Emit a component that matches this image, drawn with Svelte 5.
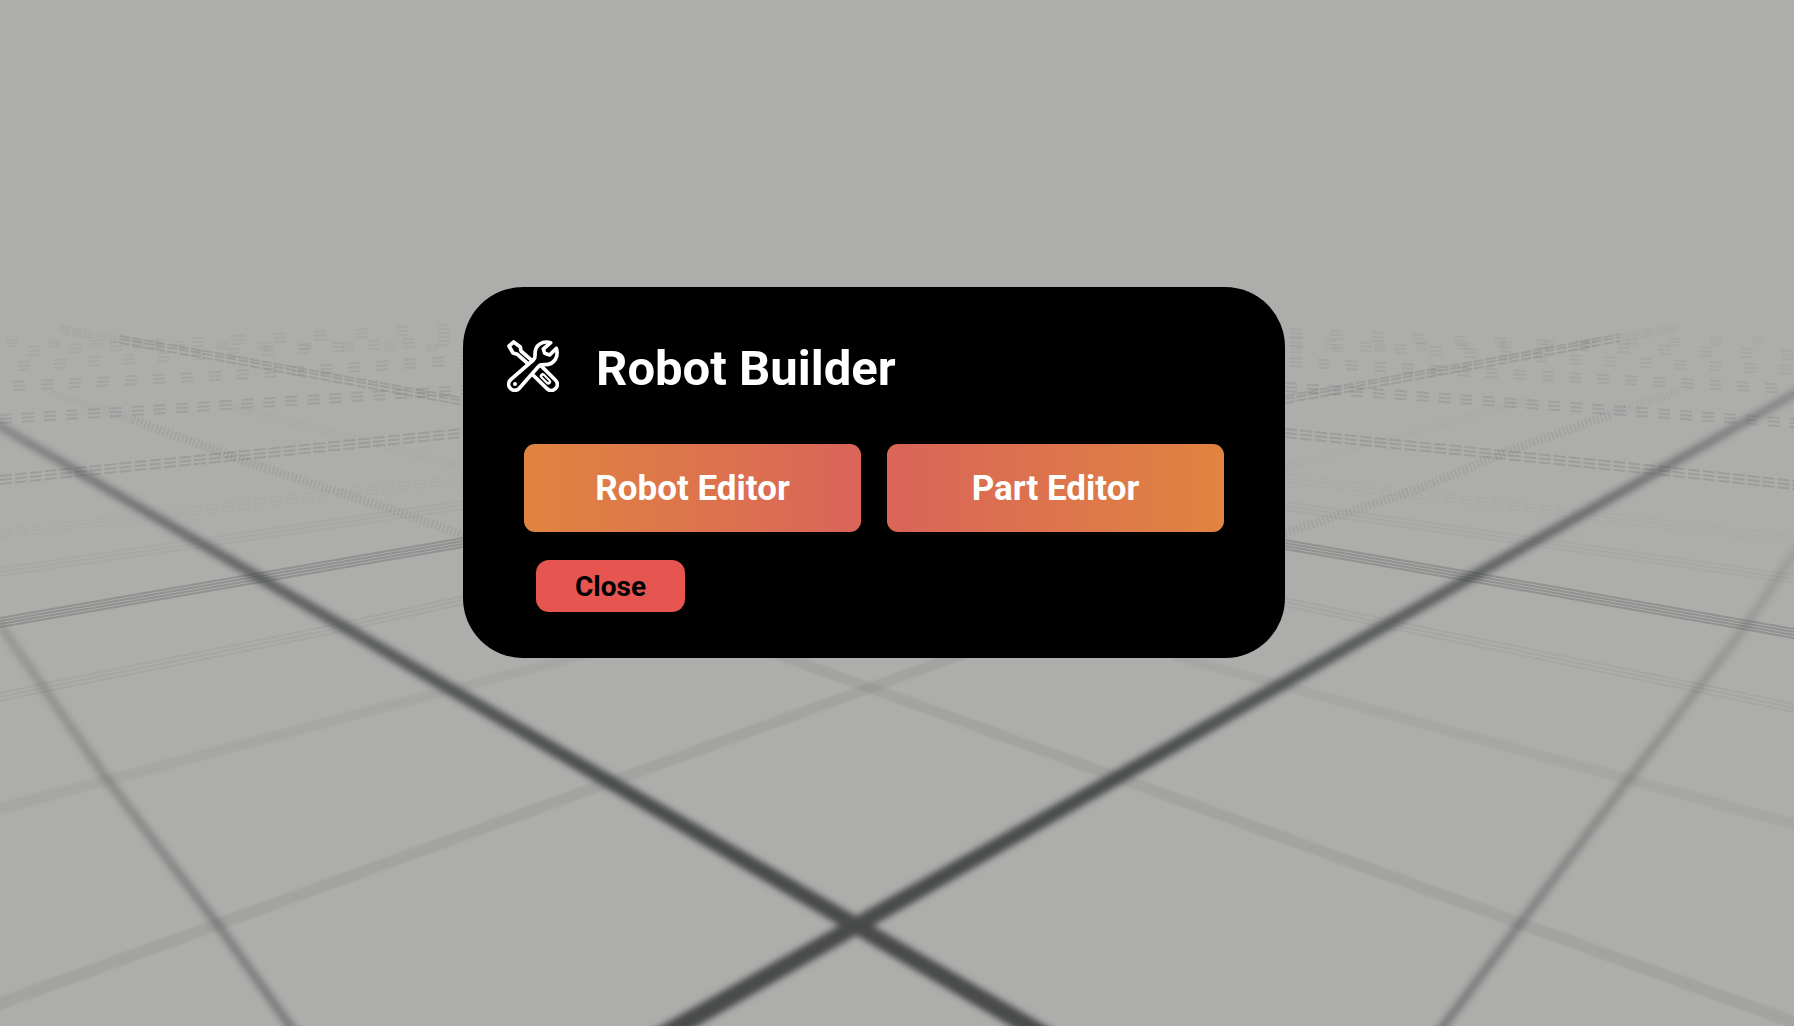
<script>
  // Tapered floor line: start point and thickness, end point and thickness.
  const band = ([x1, y1, t1, x2, y2, t2]) =>
    `${x1},${y1 - t1 / 2} ${x2},${y2 - t2 / 2} ${x2},${y2 + t2 / 2} ${x1},${y1 + t1 / 2}`;

  const major = [
    { pts: [-9, 421, 9, 1100, 1068, 22], fill: 'url(#fadeA)' },
    { pts: [1803, 389, 9, 600, 1071, 22], fill: 'url(#fadeB)' },
  ];

  const steep = [
    { d: 'M0 625 L109 782 L218 925 L303 1044', fill: 'url(#fadeC)' },
    { d: 'M1800 545 L1745 627 L1628 780 L1519 925 L1430 1044', fill: 'url(#fadeD)' },
  ];

  const minor = [
    { pts: [-10, 1007, 13, 969, 652, 11], opacity: 0.08 },
    { pts: [1804, 1026, 13, 771, 652, 11], opacity: 0.08 },
    { pts: [-10, 811, 11, 594, 652, 9], opacity: 0.05 },
    { pts: [1804, 827, 11, 1174, 656, 9], opacity: 0.05 },
  ];

  // Far lines break up into parallel hairlines.
  const striped = [
    { d: 'M0 622 L260 577 L463 542', offsets: [-4, -1, 2, 5], opacity: 0.22, dash: 'none' },
    { d: 'M1285 544 L1481 578 L1794 633', offsets: [-4, -1, 2, 5], opacity: 0.22, dash: 'none' },
    { d: 'M0 480 L77 472 L463 433', offsets: [-4, 0, 4], opacity: 0.13, dash: '12 3' },
    { d: 'M1285 433 L1665 471 L1794 485', offsets: [-4, 0, 4], opacity: 0.13, dash: '12 3' },
    { d: 'M120 340 L233 360 L463 402', offsets: [-4, -1, 3], opacity: 0.12, dash: '10 2' },
    { d: 'M1285 400 L1505 360 L1620 338', offsets: [-4, -1, 3], opacity: 0.12, dash: '10 2' },
    { d: 'M60 329 L120 340', offsets: [-3, 0, 3], opacity: 0.04, dash: '10 2' },
    { d: 'M1620 338 L1680 328', offsets: [-3, 0, 3], opacity: 0.04, dash: '10 2' },
    { d: 'M0 697 L42 688 L329 630 L463 600', offsets: [-4, 0, 4], opacity: 0.05, dash: 'none' },
    { d: 'M1285 602 L1403 627 L1699 688 L1794 708', offsets: [-4, 0, 4], opacity: 0.05, dash: 'none' },
    { d: 'M0 572 L463 505', offsets: [-4, 0, 4], opacity: 0.03, dash: 'none' },
    { d: 'M1285 506 L1794 579', offsets: [-4, 0, 4], opacity: 0.03, dash: 'none' },
    { d: 'M0 534 L463 479', offsets: [-4, 0, 4], opacity: 0.02, dash: '12 4' },
    { d: 'M1285 478 L1794 540', offsets: [-4, 0, 4], opacity: 0.02, dash: '12 4' },
    { d: 'M0 419 L133 411 L463 390', offsets: [-4, 0, 4], opacity: 0.1, dash: '12 10' },
    { d: 'M1285 387 L1430 397 L1794 423', offsets: [-4, 0, 4], opacity: 0.1, dash: '12 10' },
    { d: 'M13 386 L217 376 L360 367 L463 360', offsets: [-4, 0, 4], opacity: 0.07, dash: '12 16' },
    { d: 'M1290 362 L1526 375 L1794 389', offsets: [-4, 0, 4], opacity: 0.07, dash: '12 16' },
    { d: 'M18 366 L250 352 L463 340', offsets: [-4, 0, 4], opacity: 0.05, dash: '12 23' },
    { d: 'M1290 342 L1580 360 L1794 370', offsets: [-4, 0, 4], opacity: 0.05, dash: '12 23' },
    { d: 'M28 351 L197 342 L463 328', offsets: [-4, 0, 4], opacity: 0.05, dash: '12 29' },
    { d: 'M1290 333 L1669 350 L1794 355', offsets: [-4, 0, 4], opacity: 0.05, dash: '12 29' },
    { d: 'M6 343 L463 348', offsets: [-3, 0, 3], opacity: 0.04, dash: '12 30' },
    { d: 'M1290 349 L1794 340', offsets: [-3, 0, 3], opacity: 0.04, dash: '12 30' },
  ];

  // Receding lines seen nearly edge on, drawn as columns of fine ticks.
  const ticked = [
    { d: 'M133 420 L250 463 L393 510 L463 535', opacity: 0.07 },
    { d: 'M1285 533 L1413 491 L1519 447 L1610 415', opacity: 0.07 },
    { d: 'M50 393 L133 420', opacity: 0.03 },
    { d: 'M1610 415 L1680 390', opacity: 0.03 },
    { d: 'M233 407 L463 467', opacity: 0.02 },
    { d: 'M1285 467 L1530 400', opacity: 0.02 },
  ];
</script>

<main class="stage">
  <svg class="floor" viewBox="0 0 1794 1026" preserveAspectRatio="xMidYMid slice" aria-hidden="true">
    <defs>
      <linearGradient id="fadeA" gradientUnits="userSpaceOnUse" x1="0" y1="426" x2="857" y2="926">
        <stop offset="0" stop-color="#404444" stop-opacity="0.38" />
        <stop offset="0.3" stop-color="#404444" stop-opacity="0.68" />
        <stop offset="0.7" stop-color="#444747" stop-opacity="0.92" />
        <stop offset="1" stop-color="#494b4b" />
      </linearGradient>
      <linearGradient id="fadeB" gradientUnits="userSpaceOnUse" x1="1794" y1="395" x2="857" y2="926">
        <stop offset="0" stop-color="#404444" stop-opacity="0.34" />
        <stop offset="0.3" stop-color="#404444" stop-opacity="0.66" />
        <stop offset="0.7" stop-color="#444747" stop-opacity="0.92" />
        <stop offset="1" stop-color="#494b4b" />
      </linearGradient>
      <linearGradient id="fadeC" gradientUnits="userSpaceOnUse" x1="0" y1="627" x2="291" y2="1026">
        <stop offset="0" stop-color="#444644" stop-opacity="0.2" />
        <stop offset="1" stop-color="#444646" stop-opacity="0.48" />
      </linearGradient>
      <linearGradient id="fadeD" gradientUnits="userSpaceOnUse" x1="1794" y1="553" x2="1439" y2="1026">
        <stop offset="0" stop-color="#444644" stop-opacity="0.14" />
        <stop offset="1" stop-color="#444646" stop-opacity="0.48" />
      </linearGradient>
      <filter id="soft" filterUnits="userSpaceOnUse" x="-40" y="300" width="1880" height="800" color-interpolation-filters="sRGB">
        <feGaussianBlur stdDeviation="3" />
      </filter>
      <filter id="faint" filterUnits="userSpaceOnUse" x="-40" y="300" width="1880" height="800" color-interpolation-filters="sRGB">
        <feGaussianBlur stdDeviation="1" />
      </filter>
    </defs>

    <g filter="url(#faint)">
      {#each minor as line}
        <polygon points={band(line.pts)} fill="#303230" fill-opacity={line.opacity} />
      {/each}
    </g>
    <g fill="none" stroke="#2c2e30">
      {#each striped as line}
        {#each line.offsets as dy}
          <path d={line.d} transform="translate(0 {dy})" stroke-width="2" stroke-opacity={line.opacity} stroke-dasharray={line.dash} />
        {/each}
      {/each}
      {#each ticked as line}
        <path d={line.d} stroke-width="9" stroke-opacity={line.opacity} stroke-dasharray="2 2" />
      {/each}
    </g>
    <g filter="url(#soft)">
      {#each steep as line}
        <path d={line.d} fill="none" stroke={line.fill} stroke-width="9" />
      {/each}
      {#each major as line}
        <polygon points={band(line.pts)} fill={line.fill} />
      {/each}
    </g>
  </svg>

  <section class="panel" aria-labelledby="panel-title">
    <header>
      <svg class="tools" viewBox="36 44 156 156" aria-hidden="true">
        <g fill="none" stroke="#fff" stroke-width="11" stroke-linejoin="round" stroke-linecap="round">
          <path d="M111 106 L78 77 L76 65 L56 50 L42 62 L54 83 L67 87 L100 116" />
          <path d="M167 52 C143 45 120 58 120 85 C121 93 120 99 115 104 L47 163 C29 181 55 207 73 189 L131 123 C136 117 142 118 150 118 C178 118 192 94 184 69 L164 89 L149 84 L145 71 Z" />
          <path d="M137 120 L181 164 C199 181 173 207 156 190 L114 149" />
          <path d="M143 152 L160 169" stroke-width="17" />
        </g>
        <path d="M144 153 L159 168" stroke="#000" stroke-width="4" stroke-linecap="round" />
        <circle cx="60" cy="176" r="6" fill="#fff" />
      </svg>
      <h1 id="panel-title">Robot Builder</h1>
    </header>
    <div class="choices">
      <button class="choice robot" type="button">Robot Editor</button>
      <button class="choice part" type="button">Part Editor</button>
    </div>
    <button class="close" type="button">Close</button>
  </section>
</main>

<style>
  :global(body) {
    margin: 0;
    background: #adadab;
  }

  .stage {
    position: relative;
    box-sizing: border-box;
    min-height: 100vh;
    padding: 0 46px 81px 0;
    display: grid;
    place-items: center;
    overflow: hidden;
    font-family: Roboto, "Liberation Sans", sans-serif;
  }

  .floor {
    position: absolute;
    inset: 0;
    width: 100%;
    height: 100%;
  }

  .panel {
    position: relative;
    box-sizing: border-box;
    width: 822px;
    max-width: 100%;
    padding: 53px 61px 46px 44px;
    border-radius: 60px;
    background: #000;
  }

  header {
    display: flex;
    align-items: flex-start;
    gap: 37px;
  }

  .tools {
    width: 52px;
    height: 52px;
    flex: none;
  }

  h1 {
    margin: 0;
    color: #fff;
    font-size: 49px;
    line-height: 58px;
    font-weight: 700;
  }

  .choices {
    display: grid;
    grid-template-columns: 1fr 1fr;
    gap: 26px;
    margin: 46px 0 28px 17px;
  }

  button {
    border: 0;
    padding: 0;
    font-family: inherit;
    font-weight: 700;
    cursor: pointer;
  }

  .choice {
    height: 88px;
    border-radius: 11px;
    color: #fff;
    font-size: 35px;
  }

  .robot {
    background: linear-gradient(90deg, #e08440, #da6459);
  }

  .part {
    background: linear-gradient(90deg, #da6459, #e08440);
  }

  .close {
    display: block;
    height: 52px;
    margin-left: 29px;
    padding: 0 39px;
    border-radius: 13px;
    background: #e65550;
    color: #000;
    font-size: 28px;
  }
</style>
